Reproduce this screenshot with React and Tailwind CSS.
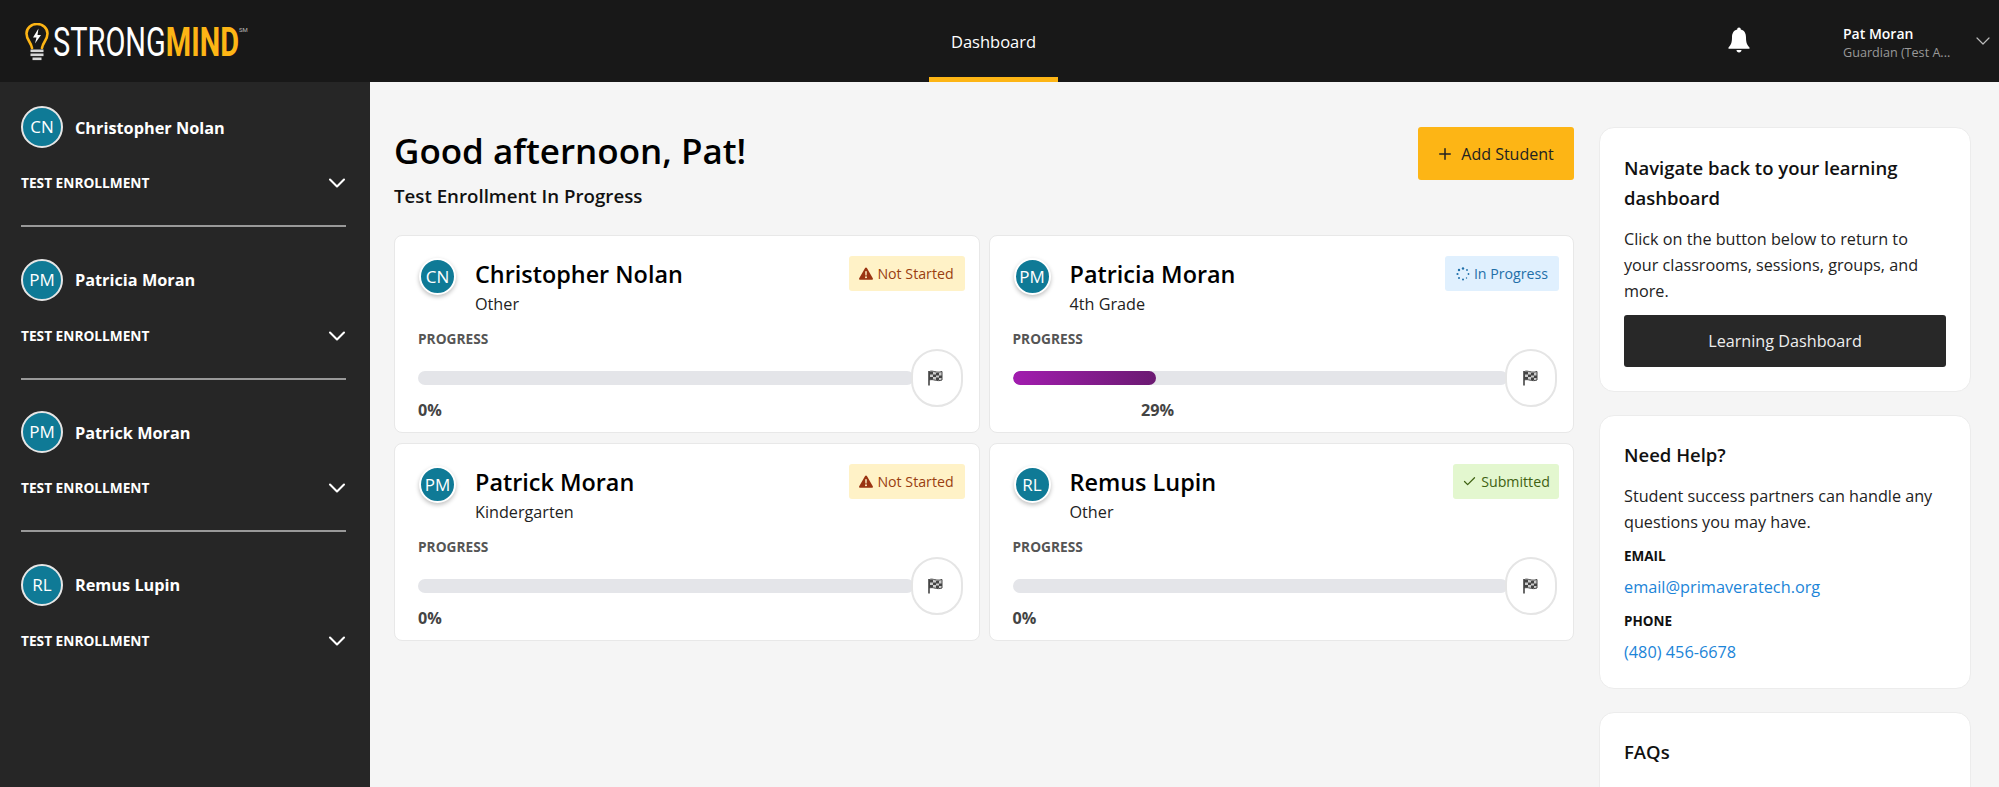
import { ChevronDown, Plus, Check } from 'lucide-react';

const students = [
  { initials: 'CN', name: 'Christopher Nolan', grade: 'Other', status: 'not', progress: 0 },
  { initials: 'PM', name: 'Patricia Moran', grade: '4th Grade', status: 'progress', progress: 29 },
  { initials: 'PM', name: 'Patrick Moran', grade: 'Kindergarten', status: 'not', progress: 0 },
  { initials: 'RL', name: 'Remus Lupin', grade: 'Other', status: 'done', progress: 0 },
];

const Logo = () => (
  <div className="flex items-start w-[240px]">
    <svg width="24" height="38" viewBox="0 0 24 38" className="shrink-0">
      <path d="M7 25 C6 19 1.5 17 1.5 10.5 A10.5 9.5 0 0 1 22.5 10.5 C22.5 17 18 19 17 25" fill="none" stroke="#fdb515" strokeWidth="2.6" strokeLinecap="round" />
      <path d="M13.5 5.5 L8 14.5 H11.5 L10 20.5 L16 12 H12.5 Z" fill="#ffffff" />
      <rect x="5.5" y="26.5" width="13" height="2.6" fill="#d9d9d9" />
      <rect x="5.5" y="30.5" width="13" height="2.6" fill="#d9d9d9" />
      <rect x="7.5" y="34.5" width="9" height="2.6" fill="#d9d9d9" />
    </svg>
    <div className="relative ml-[4px] mt-[1px] h-[38px] w-[210px]">
      <div className="origin-top-left scale-x-[0.725] whitespace-nowrap font-['Roboto',sans-serif] text-[40px] leading-[38px] text-white">
        STRONG<span className="font-bold text-[#fdb515]">MIND</span>
      </div>
      <span className="absolute left-[186px] top-[2px] font-['Roboto',sans-serif] text-[6px] leading-[8px] text-[#bbbbbb]">SM</span>
    </div>
  </div>
);

const Header = () => (
  <header className="flex h-[82px] bg-[#181818] pl-[25px] font-['Open_Sans',sans-serif] text-white">
    <div className="w-[904px] pt-[23px]">
      <Logo />
    </div>
    <div className="flex h-[82px] w-[129px] items-center justify-center border-b-[5px] border-[#fdb515] pt-[8px] text-[16.5px]">
      Dashboard
    </div>
    <div className="ml-[670px] flex items-center pb-[3px]">
      <svg width="22" height="26" viewBox="0 0 22 26" fill="#ffffff">
        <path d="M11 0.5 C12.2 0.5 12.8 1.3 12.8 2.6 C16.5 3.5 18 6.5 18 10.5 C18 15.5 19 18 21.5 20.5 V21.8 H0.5 V20.5 C3 18 4 15.5 4 10.5 C4 6.5 5.5 3.5 9.2 2.6 C9.2 1.3 9.8 0.5 11 0.5 Z" />
        <path d="M8.5 23 H13.5 C13.5 24.6 12.4 25.5 11 25.5 C9.6 25.5 8.5 24.6 8.5 23 Z" />
      </svg>
    </div>
    <div className="ml-[93px] w-[110px] pt-[25px]">
      <div className="text-[14px] font-semibold leading-[18px]">Pat Moran</div>
      <div className="mt-[2px] whitespace-nowrap text-[12.6px] leading-[15px] text-[#999999]">Guardian (Test A...</div>
    </div>
    <div className="ml-[18px] flex items-center">
      <ChevronDown size={24} strokeWidth={1.2} className="text-[#bbbbbb]" />
    </div>
  </header>
);

const Avatar = ({ initials, large }) =>
  large ? (
    <div className="flex h-[37px] w-[37px] shrink-0 items-center justify-center rounded-full border-2 border-white bg-[#0f7a96] text-[17px] text-white shadow-[0_2px_4px_rgba(0,0,0,0.25)]">
      {initials}
    </div>
  ) : (
    <div className="flex h-[42px] w-[42px] shrink-0 items-center justify-center rounded-full border-2 border-[#e6e6e6] bg-[#0f7a96] text-[17px] text-white">
      {initials}
    </div>
  );

const Sidebar = () => (
  <aside className="w-[370px] shrink-0 bg-[#262626] pl-[21px] pr-[24px] pt-[24px] font-['Open_Sans',sans-serif] text-white">
    {students.map((s, i) => (
      <div key={s.name} className={i < 3 ? 'mb-[31.5px] h-[121px] border-b-2 border-[#999999]' : ''}>
        <div className="flex items-center gap-[12px]">
          <Avatar initials={s.initials} />
          <div className="pt-[2px] text-[16.3px] font-bold">{s.name}</div>
        </div>
        <div className="mt-[21px] flex items-center justify-between">
          <div className="text-[13.7px] font-bold leading-[24px]">TEST ENROLLMENT</div>
          <ChevronDown size={28} strokeWidth={1.8} className="mr-[-5px]" />
        </div>
      </div>
    ))}
  </aside>
);

const Spinner = () => (
  <svg width="14" height="14" viewBox="0 0 14 14" fill="#1f6fa8">
    <circle cx="7" cy="1.5" r="1.2" />
    <circle cx="11" cy="3" r="0.9" />
    <circle cx="12.5" cy="7" r="0.9" />
    <circle cx="10.5" cy="11" r="0.7" />
    <circle cx="7" cy="12.5" r="1" />
    <circle cx="3" cy="11" r="1" />
    <circle cx="1.5" cy="7" r="1.1" />
    <circle cx="3" cy="3" r="1.2" />
  </svg>
);

const StatusBadge = ({ status }) => {
  if (status === 'not') {
    return (
      <div className="flex h-[35px] w-[116px] items-center justify-center gap-[4px] rounded-[3px] bg-[#fff2c7] text-[14.2px] text-[#9a3e10]">
        <svg width="14" height="13" viewBox="0 0 14 13" fill="#9a3412">
          <path fillRule="evenodd" d="M7 0.5 C7.4 0.5 7.7 0.7 7.9 1 L13.8 11.2 C14.2 11.9 13.7 12.7 12.9 12.7 H1.1 C0.3 12.7 -0.2 11.9 0.2 11.2 L6.1 1 C6.3 0.7 6.6 0.5 7 0.5 Z M6.2 4.2 L6.4 8.4 H7.6 L7.8 4.2 Z M7 9.2 A1 1 0 1 0 7 11.2 A1 1 0 1 0 7 9.2 Z" />
        </svg>
        Not Started
      </div>
    );
  }
  if (status === 'progress') {
    return (
      <div className="flex h-[35px] w-[114px] items-center justify-center gap-[4px] rounded-[3px] bg-[#e0f0fe] text-[14.2px] text-[#1f6fa8]">
        <Spinner />
        In Progress
      </div>
    );
  }
  return (
    <div className="flex h-[35px] w-[106px] items-center justify-center gap-[4px] rounded-[3px] bg-[#e3f7cf] text-[14.2px] text-[#3f6212]">
      <Check size={15} strokeWidth={2} />
      Submitted
    </div>
  );
};

const Flag = () => (
  <svg width="15" height="16" viewBox="0 0 15 16" className="mr-[2px]">
    <path d="M1 1 V15.5" stroke="#444444" strokeWidth="1.6" />
    <path d="M1.5 1.5 C5 0 8 3.5 14 1.5 V10 C9 12 5 8.5 1.5 10 Z" fill="#cccccc" stroke="#444444" strokeWidth="1" />
    <path d="M2 2 H5 V4.5 H2 Z M8 3 H11 V5.5 H8 Z M5 4.5 H8 V7 H5 Z M11 5.5 H14 V8 H11 Z M2 7 H5 V9.5 H2 Z M8 7.5 H11 V10 H8 Z" fill="#444444" />
  </svg>
);

const StudentCard = ({ student }) => (
  <div className="h-[198px] rounded-[8px] border border-[#e8e8e8] bg-white pl-[23px] pr-[14px] pt-[20px]">
    <div className="flex items-start justify-between">
      <div className="flex gap-[19px]">
        <div className="pl-[1px] pt-[2px]">
          <Avatar initials={student.initials} large />
        </div>
        <div className="pt-[3px]">
          <div className="text-[23.4px] font-semibold leading-[30px] text-black">{student.name}</div>
          <div className="mt-[5px] text-[16.2px] leading-[21px] text-[#222222]">{student.grade}</div>
        </div>
      </div>
      <StatusBadge status={student.status} />
    </div>
    <div className="mt-[15px] text-[13.7px] font-bold leading-[18px] text-[#555555]">PROGRESS</div>
    <div className="relative mt-[23px] flex h-[14px] items-center pr-[51px]">
      <div className="h-[14px] w-full overflow-hidden rounded-full bg-[#e4e5e9]">
        <div
          className="h-full rounded-full bg-gradient-to-r from-[#a21caf] to-[#6b1a72]"
          style={{ width: `${student.progress}%` }}
        />
      </div>
      <div className="absolute right-[2px] top-[-22px] flex h-[58px] w-[52px] items-center justify-center rounded-full border-2 border-[#e5e5e5] bg-white">
        <Flag />
      </div>
    </div>
    <div className="mt-[15px] text-[16.2px] font-bold leading-[21px] text-[#444444]">
      {student.progress > 0 ? (
        <span className="block text-center" style={{ width: `${student.progress * 10}px` }}>{student.progress}%</span>
      ) : (
        '0%'
      )}
    </div>
  </div>
);

const SideCard = ({ children, className }) => (
  <div className={`shrink-0 rounded-[15px] border border-[#ececec] bg-white px-[24px] ${className}`}>
    {children}
  </div>
);

const Label = ({ children, className }) => (
  <div className={`text-[13.5px] font-bold leading-[18px] text-[#111111] ${className}`}>{children}</div>
);

export default function App() {
  return (
    <div className="h-[787px] overflow-hidden bg-[#f5f5f5] font-['Open_Sans',sans-serif]">
      <Header />
      <div className="flex h-[705px]">
        <Sidebar />
        <main className="w-[1229px] shrink-0 pl-[24px] pr-[25px] pt-[45px]">
          <div className="flex items-start justify-between">
            <div>
              <h1 className="text-[35px] font-semibold leading-[48px] text-black">Good afternoon, Pat!</h1>
              <div className="mt-[8px] text-[18.7px] font-semibold leading-[25px] text-[#111111]">Test Enrollment In Progress</div>
            </div>
            <button className="flex h-[53px] w-[156px] items-center justify-center gap-[7px] rounded-[3px] bg-[#fdb515] pr-[2px] text-[16px] text-[#222222]">
              <Plus size={18} strokeWidth={2} />
              Add Student
            </button>
          </div>
          <div className="mt-[27px] grid grid-cols-2 gap-x-[9px] gap-y-[10px]">
            {students.map(s => (
              <StudentCard key={s.name} student={s} />
            ))}
          </div>
        </main>
        <div className="flex w-[400px] flex-col gap-[23px] pr-[28px] pt-[45px]">
          <SideCard className="h-[265px] pt-[25px]">
            <h3 className="text-[18.5px] font-semibold leading-[30px] text-[#111111]">Navigate back to your learning dashboard</h3>
            <p className="mt-[13px] pr-[5px] text-[16.2px] leading-[26px] text-[#222222]">
              Click on the button below to return to your classrooms, sessions, groups, and more.
            </p>
            <button className="mt-[11px] h-[52px] w-full rounded-[3px] bg-[#282828] text-[16.2px] text-[#eeeeee]">Learning Dashboard</button>
          </SideCard>
          <SideCard className="h-[274px] pt-[23px]">
            <h3 className="text-[18.5px] font-semibold leading-[31px] text-[#111111]">Need Help?</h3>
            <p className="mt-[13px] text-[16.2px] leading-[26px] text-[#222222]">
              Student success partners can handle any questions you may have.
            </p>
            <Label className="mt-[12px]">EMAIL</Label>
            <a className="mt-[11.5px] block text-[16.3px] leading-[21px] text-[#1c85d8]">email@primaveratech.org</a>
            <Label className="mt-[14.5px]">PHONE</Label>
            <a className="mt-[11.5px] block text-[16.3px] leading-[21px] text-[#1c85d8]">(480) 456-6678</a>
          </SideCard>
          <SideCard className="h-[100px] pt-[23px]">
            <h3 className="text-[18.5px] font-semibold leading-[31px] text-[#111111]">FAQs</h3>
          </SideCard>
        </div>
      </div>
    </div>
  );
}
